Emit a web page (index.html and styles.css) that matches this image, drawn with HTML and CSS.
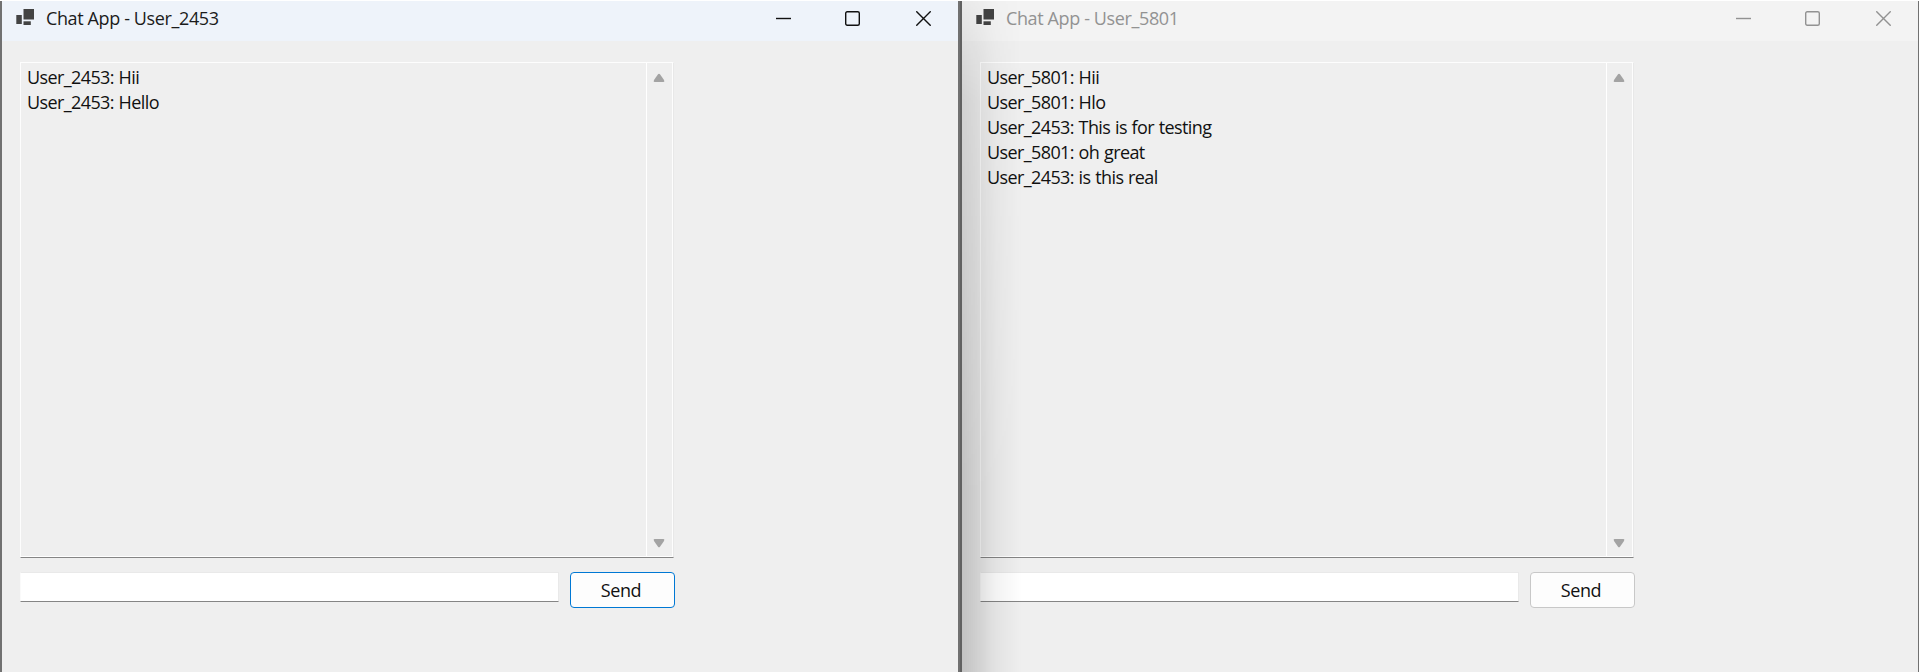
FILE: index.html
```html
<!DOCTYPE html>
<html lang="en">
<head>
<meta charset="utf-8">
<title>Chat App</title>
<link rel="stylesheet" href="styles.css">
</head>
<body>
<main class="desktop">
  <section class="window active">
    <header class="titlebar">
      <svg class="app-icon" width="20" height="18" viewBox="0 0 20 18"><rect x="8.500" y="1" width="10.500" height="10.500"/><rect x="1.300" y="7" width="5.500" height="9"/><rect x="8.500" y="13.300" width="7.300" height="3.700"/></svg>
      <h1 class="title">Chat App - User_2453</h1>
      <div class="controls">
        <svg width="15" height="15" viewBox="0 0 15 15"><path d="M0 7.500h15"/></svg>
        <svg width="15" height="15" viewBox="0 0 15 15"><rect x=".7" y=".7" width="13.600" height="13.600" rx="1.500"/></svg>
        <svg class="close" width="15" height="15" viewBox="0 0 15 15"><path d="M.3.3l14.400 14.400M14.700.3L.3 14.700"/></svg>
      </div>
    </header>
    <div class="client">
      <div class="log">
        <div class="messages"><p>User_2453: Hii</p><p>User_2453: Hello</p></div>
        <div class="scrollbar">
          <svg width="12" height="10" viewBox="0 0 12 10"><path d="M5 1.200Q6 .2 7 1.200L11 7Q12 9 10.500 9H1.500Q0 9 1 7Z"/></svg>
          <svg width="12" height="10" viewBox="0 0 12 10"><path d="M5 8.800Q6 9.800 7 8.800L11 3Q12 1 10.500 1H1.500Q0 1 1 3Z"/></svg>
        </div>
      </div>
      <div class="compose"><input class="entry" type="text" aria-label="Message"><button class="send">Send</button></div>
    </div>
  </section>
  <section class="window inactive">
    <header class="titlebar">
      <svg class="app-icon" width="20" height="18" viewBox="0 0 20 18"><rect x="8.500" y="1" width="10.500" height="10.500"/><rect x="1.300" y="7" width="5.500" height="9"/><rect x="8.500" y="13.300" width="7.300" height="3.700"/></svg>
      <h1 class="title">Chat App - User_5801</h1>
      <div class="controls">
        <svg width="15" height="15" viewBox="0 0 15 15"><path d="M0 7.500h15"/></svg>
        <svg width="15" height="15" viewBox="0 0 15 15"><rect x=".7" y=".7" width="13.600" height="13.600" rx="1.500"/></svg>
        <svg class="close" width="15" height="15" viewBox="0 0 15 15"><path d="M.3.3l14.400 14.400M14.700.3L.3 14.700"/></svg>
      </div>
    </header>
    <div class="client">
      <div class="log">
        <div class="messages"><p>User_5801: Hii</p><p>User_5801: Hlo</p><p>User_2453: This is for testing</p><p>User_5801: oh great</p><p>User_2453: is this real</p></div>
        <div class="scrollbar">
          <svg width="12" height="10" viewBox="0 0 12 10"><path d="M5 1.200Q6 .2 7 1.200L11 7Q12 9 10.500 9H1.500Q0 9 1 7Z"/></svg>
          <svg width="12" height="10" viewBox="0 0 12 10"><path d="M5 8.800Q6 9.800 7 8.800L11 3Q12 1 10.500 1H1.500Q0 1 1 3Z"/></svg>
        </div>
      </div>
      <div class="compose"><input class="entry" type="text" aria-label="Message"><button class="send">Send</button></div>
    </div>
  </section>
</main>
</body>
</html>
```
FILE: styles.css
```css
* { box-sizing: border-box; }
body { margin: 0; background: #fff; font-family: "Open Sans", "Noto Sans", sans-serif; overflow: hidden; }
.desktop { display: flex; height: 672px; padding-top: 1px; }
.window { position: relative; width: 960px; background: #efefef; border: 0 solid #717171; border-left-width: 2px; border-right-width: 2px; }
.inactive { width: 959px; border-left-color: #616161; border-right-width: 1px; }
/* shadow cast by the active window onto its neighbour */
.inactive::after { content: ""; position: absolute; left: 0; top: 0; bottom: 0; width: 60px; pointer-events: none;
  background: linear-gradient(90deg, rgba(0,0,0,.19), rgba(0,0,0,.13) 25%, rgba(0,0,0,.05) 55%, transparent);
  mask-image: linear-gradient(rgba(0,0,0,.2), rgba(0,0,0,.65) 100px, #000 500px); }
.titlebar { display: flex; align-items: flex-start; height: 40px; padding: 7px 27px 0 13px; background: #eef3fa; }
.inactive .titlebar { background: #f3f3f3; }
.app-icon { fill: #434343; }
.title { margin: -2px 0 0 11px; font-size: 18px; line-height: 24px; font-weight: 400; letter-spacing: -.38px; color: #1b1b1b; }
.inactive .title { color: #929292; }
.controls { display: flex; gap: 54px; margin: 3px 0 0 auto; }
.controls svg { fill: none; stroke: #111; stroke-width: 1.4; }
.controls .close { margin-left: 2px; }
.inactive .controls svg { stroke: #929292; }
.client { padding: 21px 0 0 18px; }
.log { display: flex; width: 654px; height: 496px; border: 1px solid #fdfdfd; border-right-color: #e8e8e8; border-bottom-color: #858585; box-shadow: inset 0 -1px #fff; }
.messages { flex: 1; padding: 2px 0 0 6px; }
.messages p { margin: 0; font-size: 18px; line-height: 25px; letter-spacing: -.6px; word-spacing: .6px; color: #111; }
.scrollbar { width: 27px; border-left: 1px solid #fff; border-right: 1px solid #fdfdfd; display: flex; flex-direction: column; align-items: center; justify-content: space-between; padding: 10px 1px 9px 0; }
.scrollbar svg { fill: #a3a3a3; }
.compose { display: flex; align-items: flex-start; gap: 11px; margin-top: 14px; }
.entry { width: 539px; height: 30px; margin: 0; padding: 0 6px; border: 1px solid #e9e9e9; border-left-color: #fafafa; border-bottom-color: #858585; border-radius: 0; background: #fff; font: 18px "Open Sans", sans-serif; outline: 0; }
.send { width: 105px; height: 36px; padding: 0 3px 0 0; border: 1px solid #c8c8c8; border-radius: 4px; background: #fdfdfd; color: #111; font: 18px/24px "Open Sans", "Noto Sans", sans-serif; letter-spacing: -.4px; }
.active .send { border-color: #0078d4; }
```
